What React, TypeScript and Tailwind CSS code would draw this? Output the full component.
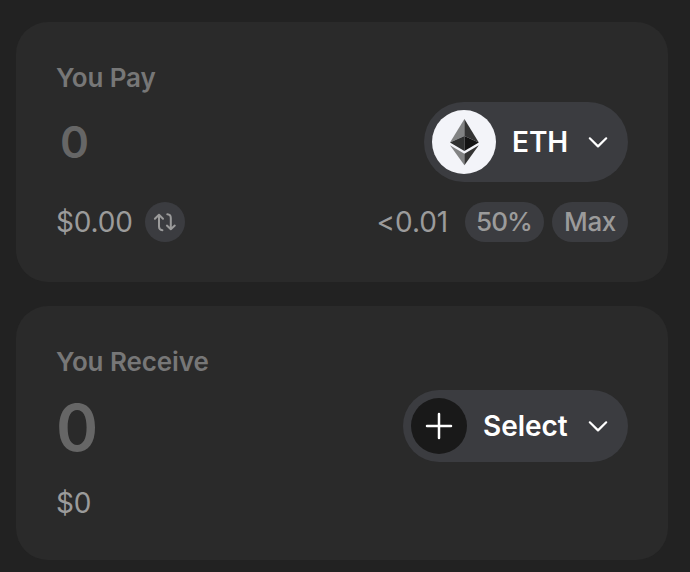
import React from 'react'

const EthIcon = () => (
  <svg width="64" height="64" viewBox="0 0 64 64" className="shrink-0">
    <circle cx="32" cy="32" r="32" fill="#F3F4F9" />
    <path d="M32.4 9L18 32.4L32.4 26Z" fill="#828384" />
    <path d="M32.4 9L46.8 32.4L32.4 26Z" fill="#343434" />
    <path d="M18 32.4L32.4 26V41Z" fill="#2F3030" />
    <path d="M46.8 32.4L32.4 26V41Z" fill="#131313" />
    <path d="M18 35.2L32.4 43.7V55.2Z" fill="#828384" />
    <path d="M46.8 35.2L32.4 43.7V55.2Z" fill="#343434" />
  </svg>
);

const Chevron = () => (
  <svg width="24" height="24" viewBox="0 0 24 24" fill="none" stroke="white" strokeWidth="2.2" strokeLinecap="round" strokeLinejoin="round" className="shrink-0">
    <path d="M3.8 8.3L12 16.4L20.2 8.3" />
  </svg>
);

const SwapIcon = () => (
  <svg width="40" height="40" viewBox="0 0 40 40" fill="none" stroke="#9b9b9b" strokeWidth="2" strokeLinecap="round" strokeLinejoin="round">
    <path d="M9.9 16.8L14 12.8L18 16.8M14 12.8V24.6Q14 28 17.4 28.2" />
    <path d="M22.3 12.3Q25.8 12.5 25.8 16V27.3M21.9 23.6L25.8 27.3L29.8 23.6" />
  </svg>
);

const PlusIcon = () => (
  <svg width="56" height="56" viewBox="0 0 56 56" fill="none" stroke="white" strokeWidth="2.5" strokeLinecap="round" className="shrink-0">
    <circle cx="28" cy="28" r="28" fill="#191919" stroke="none" />
    <path d="M28 16V40M16 28H40" />
  </svg>
);

type TokenProps = {
  icon: React.ReactNode;
  label: string;
  className: string;
};

const TokenButton: React.FC<TokenProps> = ({ icon, label, className }) => (
  <button type="button" className={`flex items-center rounded-full bg-[#3b3c40] pl-2 pr-[18px] text-white ${className}`}>
    {icon}
    <span className="ml-4 mr-auto text-[28px] font-semibold leading-9 tracking-[-0.05px]">{label}</span>
    <Chevron />
  </button>
);

const App: React.FC = () => {
  return (
    <main className="flex h-[572px] w-[690px] flex-col gap-6 overflow-hidden bg-[#222222] pl-4 pr-[22px] pt-[22px] font-['Inter',sans-serif] text-[#9b9b9b]">
      <section className="h-[260px] shrink-0 rounded-[32px] bg-[#2a2a2a] p-10">
        <h2 className="text-[26px] font-semibold leading-8 tracking-[-0.15px] text-[#777777]">You Pay</h2>
        <div className="mt-2 flex h-20 items-center justify-between">
          <span className="pl-1 text-[44px] font-semibold leading-none text-[#666666]">0</span>
          <TokenButton icon={<EthIcon />} label="ETH" className="h-20 w-[204px]" />
        </div>
        <div className="mt-5 flex h-10 items-center">
          <span className="text-[28px] tracking-[-0.2px]">$0.00</span>
          <button type="button" className="ml-3 size-10 rounded-full bg-[#3b3c40]">
            <SwapIcon />
          </button>
          <span className="ml-auto mr-[17px] text-[28px] tracking-[-0.1px]">&lt;0.01</span>
          <button type="button" className="mr-2 h-10 w-[79px] rounded-full bg-[#3b3c40] pr-px text-[26px] font-medium leading-10 tracking-[-0.9px]">50%</button>
          <button type="button" className="h-10 w-[76px] rounded-full bg-[#3b3c40] text-[26px] font-medium leading-10 tracking-[-0.3px]">Max</button>
        </div>
      </section>

      <section className="h-[254px] shrink-0 rounded-[32px] bg-[#2a2a2a] p-10">
        <h2 className="text-[26px] font-semibold leading-8 tracking-[-0.1px] text-[#777777]">You Receive</h2>
        <div className="mt-3 flex h-[72px] items-center justify-between">
          <span className="pt-[3px] text-[64px] font-semibold leading-none text-[#666666]">0</span>
          <TokenButton icon={<PlusIcon />} label="Select" className="h-[72px] w-[225px]" />
        </div>
        <p className="mt-[21px] text-[28px] leading-10 tracking-[-0.2px]">$0</p>
      </section>
    </main>
  )
}

export default App
